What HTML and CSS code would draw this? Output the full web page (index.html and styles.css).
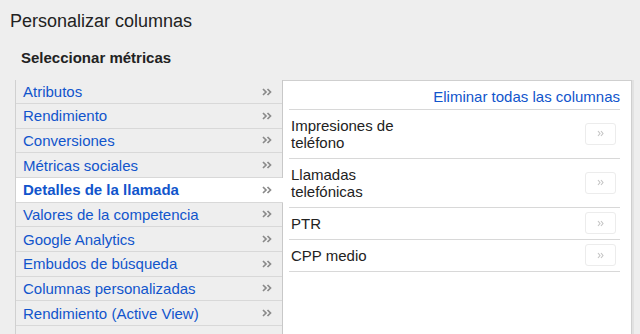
FILE: index.html
```html
<!DOCTYPE html>
<html lang="es">
<head>
  <meta charset="UTF-8">
  <title>Personalizar columnas</title>
  <meta name="viewport" content="width=device-width, initial-scale=1.0">
  <link rel="stylesheet" href="styles.css">
</head>
<body>

  <h1 class="title">Personalizar columnas</h1>
  <h2 class="subtitle">Seleccionar métricas</h2>

  <div class="columns">
    <ul class="groups">
      <li class="group"><span>Atributos</span><svg class="chev" width="10" height="8" viewBox="0 0 10 8"><path d="M1 1l3 3-3 3M5.5 1l3 3-3 3"/></svg></li>
      <li class="group"><span>Rendimiento</span><svg class="chev" width="10" height="8" viewBox="0 0 10 8"><path d="M1 1l3 3-3 3M5.5 1l3 3-3 3"/></svg></li>
      <li class="group"><span>Conversiones</span><svg class="chev" width="10" height="8" viewBox="0 0 10 8"><path d="M1 1l3 3-3 3M5.5 1l3 3-3 3"/></svg></li>
      <li class="group"><span>Métricas sociales</span><svg class="chev" width="10" height="8" viewBox="0 0 10 8"><path d="M1 1l3 3-3 3M5.5 1l3 3-3 3"/></svg></li>
      <li class="group selected"><span>Detalles de la llamada</span><svg class="chev" width="10" height="8" viewBox="0 0 10 8"><path d="M1 1l3 3-3 3M5.5 1l3 3-3 3"/></svg></li>
      <li class="group"><span>Valores de la competencia</span><svg class="chev" width="10" height="8" viewBox="0 0 10 8"><path d="M1 1l3 3-3 3M5.5 1l3 3-3 3"/></svg></li>
      <li class="group"><span>Google Analytics</span><svg class="chev" width="10" height="8" viewBox="0 0 10 8"><path d="M1 1l3 3-3 3M5.5 1l3 3-3 3"/></svg></li>
      <li class="group"><span>Embudos de búsqueda</span><svg class="chev" width="10" height="8" viewBox="0 0 10 8"><path d="M1 1l3 3-3 3M5.5 1l3 3-3 3"/></svg></li>
      <li class="group"><span>Columnas personalizadas</span><svg class="chev" width="10" height="8" viewBox="0 0 10 8"><path d="M1 1l3 3-3 3M5.5 1l3 3-3 3"/></svg></li>
      <li class="group"><span>Rendimiento (Active View)</span><svg class="chev" width="10" height="8" viewBox="0 0 10 8"><path d="M1 1l3 3-3 3M5.5 1l3 3-3 3"/></svg></li>
    </ul>

    <div class="panel">
      <div class="panel-head"><a class="remove-all" href="#">Eliminar todas las columnas</a></div>
      <div class="metric">
        <span class="metric-name">Impresiones de teléfono</span>
        <button class="add" type="button"><svg width="7" height="7" viewBox="0 0 7 7"><path d="M1 1l2 2.5-2 2.5M4 1l2 2.5-2 2.5"/></svg></button>
      </div>
      <div class="metric">
        <span class="metric-name">Llamadas telefónicas</span>
        <button class="add" type="button"><svg width="7" height="7" viewBox="0 0 7 7"><path d="M1 1l2 2.5-2 2.5M4 1l2 2.5-2 2.5"/></svg></button>
      </div>
      <div class="metric">
        <span class="metric-name">PTR</span>
        <button class="add" type="button"><svg width="7" height="7" viewBox="0 0 7 7"><path d="M1 1l2 2.5-2 2.5M4 1l2 2.5-2 2.5"/></svg></button>
      </div>
      <div class="metric">
        <span class="metric-name">CPP medio</span>
        <button class="add" type="button"><svg width="7" height="7" viewBox="0 0 7 7"><path d="M1 1l2 2.5-2 2.5M4 1l2 2.5-2 2.5"/></svg></button>
      </div>
    </div>
  </div>

</body>
</html>
```

FILE: styles.css
```css
body {
  margin: 0;
  background: #eeeeee;
  color: #222;
  font-family: "Liberation Sans", Arial, sans-serif;
  overflow: hidden;
}
.title {
  margin: 10px 0 0 10px;
  font-size: 18px;
  font-weight: normal;
  line-height: 22px;
}
.subtitle {
  margin: 17px 0 13px 21px;
  font-size: 15px;
  font-weight: bold;
  line-height: 18px;
}
.columns {
  display: flex;
  margin-left: 15px;
  height: 260px;
}
.groups {
  list-style: none;
  margin: 0;
  padding: 0;
  width: 266px;
  border-left: 1px solid #d0d0d0;
  border-right: 1px solid #c8c8c8;
}
.group {
  display: flex;
  align-items: center;
  justify-content: space-between;
  box-sizing: border-box;
  height: 24.67px;
  padding: 0 10px 0 7px;
  border-bottom: 1px solid #d8d8d8;
  color: #1155cc;
  font-size: 15px;
}
.group:first-child {
  height: 24px;
}
.group.selected {
  margin-right: -1px;
  padding-right: 11px;
  background: #fff;
  font-weight: bold;
}
.chev {
  fill: none;
  stroke: #8a8a8a;
  stroke-width: 1.7;
}
.panel {
  width: 331px;
  padding: 0 11px 0 6px;
  background: #fff;
  border-top: 1px solid #cfcfcf;
  border-right: 1px solid #cfcfcf;
  box-shadow: 2px 0 0 #e2e2e2;
}
.panel-head {
  height: 25px;
  padding-top: 3px;
  text-align: right;
  border-bottom: 1px solid #d8d8d8;
  line-height: 25px;
}
.remove-all {
  color: #1155cc;
  font-size: 15px;
  text-decoration: none;
}
.metric {
  display: flex;
  align-items: center;
  justify-content: space-between;
  padding: 7px 4px 7px 2px;
  border-bottom: 1px solid #d8d8d8;
}
.metric-name {
  width: 125px;
  font-size: 15px;
  line-height: 17px;
}
.add {
  display: flex;
  align-items: center;
  justify-content: center;
  width: 31px;
  height: 22px;
  margin: -3px 0 -2px;
  padding: 0;
  background: #fff;
  border: 1px solid #ececec;
  border-radius: 3px;
}
.add svg {
  fill: none;
  stroke: #c4c4c4;
  stroke-width: 1.1;
}
```
